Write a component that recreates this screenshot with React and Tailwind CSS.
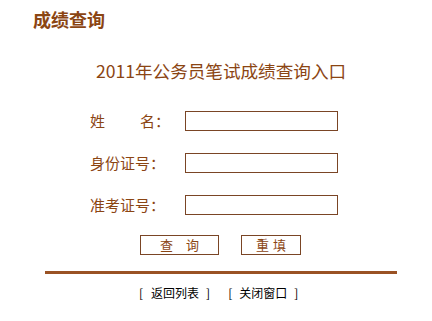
const Field = ({ children }) => (
  <div className="flex items-center h-[20px]">
    <span className="w-[140px] shrink-0 pl-[45px] flex text-[15px] leading-[20px] whitespace-pre text-[#8b4513]">{children}</span>
    <input type="text" className="w-[153px] shrink-0 h-[20px] border border-[#7a4525] bg-white outline-none" />
  </div>
)

const App = () => {
  return (
    <div
      className="w-[432px] h-[321px] bg-white overflow-hidden"
      style={{ fontFamily: '"Noto Sans CJK SC", "Noto Sans", sans-serif' }}
    >
      <h1 className="pl-[33px] pt-[9px] text-[18px] leading-[20px] font-bold text-[#8b4513]">成绩查询</h1>

      <div className="ml-[45px] w-[352px]">
        <p className="mt-[32px] text-center text-[17.6px] leading-[20px] text-[#8b4513]">
          2011年公务员笔试成绩查询入口
        </p>

        <div className="mt-[30px] flex flex-col gap-[22px]">
          <Field>
            <span>姓</span>
            <span className="ml-[35px]">名：</span>
          </Field>
          <Field>身份证号：</Field>
          <Field>准考证号：</Field>
        </div>

        <div className="mt-[20px] flex pl-[95px] gap-[22px]">
          <button className="w-[79px] h-[20px] border border-[#7a4525] bg-white text-[13px] leading-[18px] tracking-[13px] pl-[13px] text-[#8b4513]">
            查询
          </button>
          <button className="w-[60px] h-[20px] border border-[#7a4525] bg-white text-[13px] leading-[18px] tracking-[4px] pl-[4px] text-[#8b4513]">
            重填
          </button>
        </div>

        <div className="mt-[16px] h-[3px] bg-[#9a5224]"></div>

        <div className="mt-[13px] flex pl-[94px] text-[12px] leading-[12px] text-black">
          <a href="#" className="flex">
            <span>[</span>
            <span className="ml-[8px]">返回列表</span>
            <span className="ml-[7px]">]</span>
          </a>
          <a href="#" className="flex ml-[18px]">
            <span>[</span>
            <span className="ml-[7px]">关闭窗口</span>
            <span className="ml-[7px]">]</span>
          </a>
        </div>
      </div>
    </div>
  )
}

export default App
